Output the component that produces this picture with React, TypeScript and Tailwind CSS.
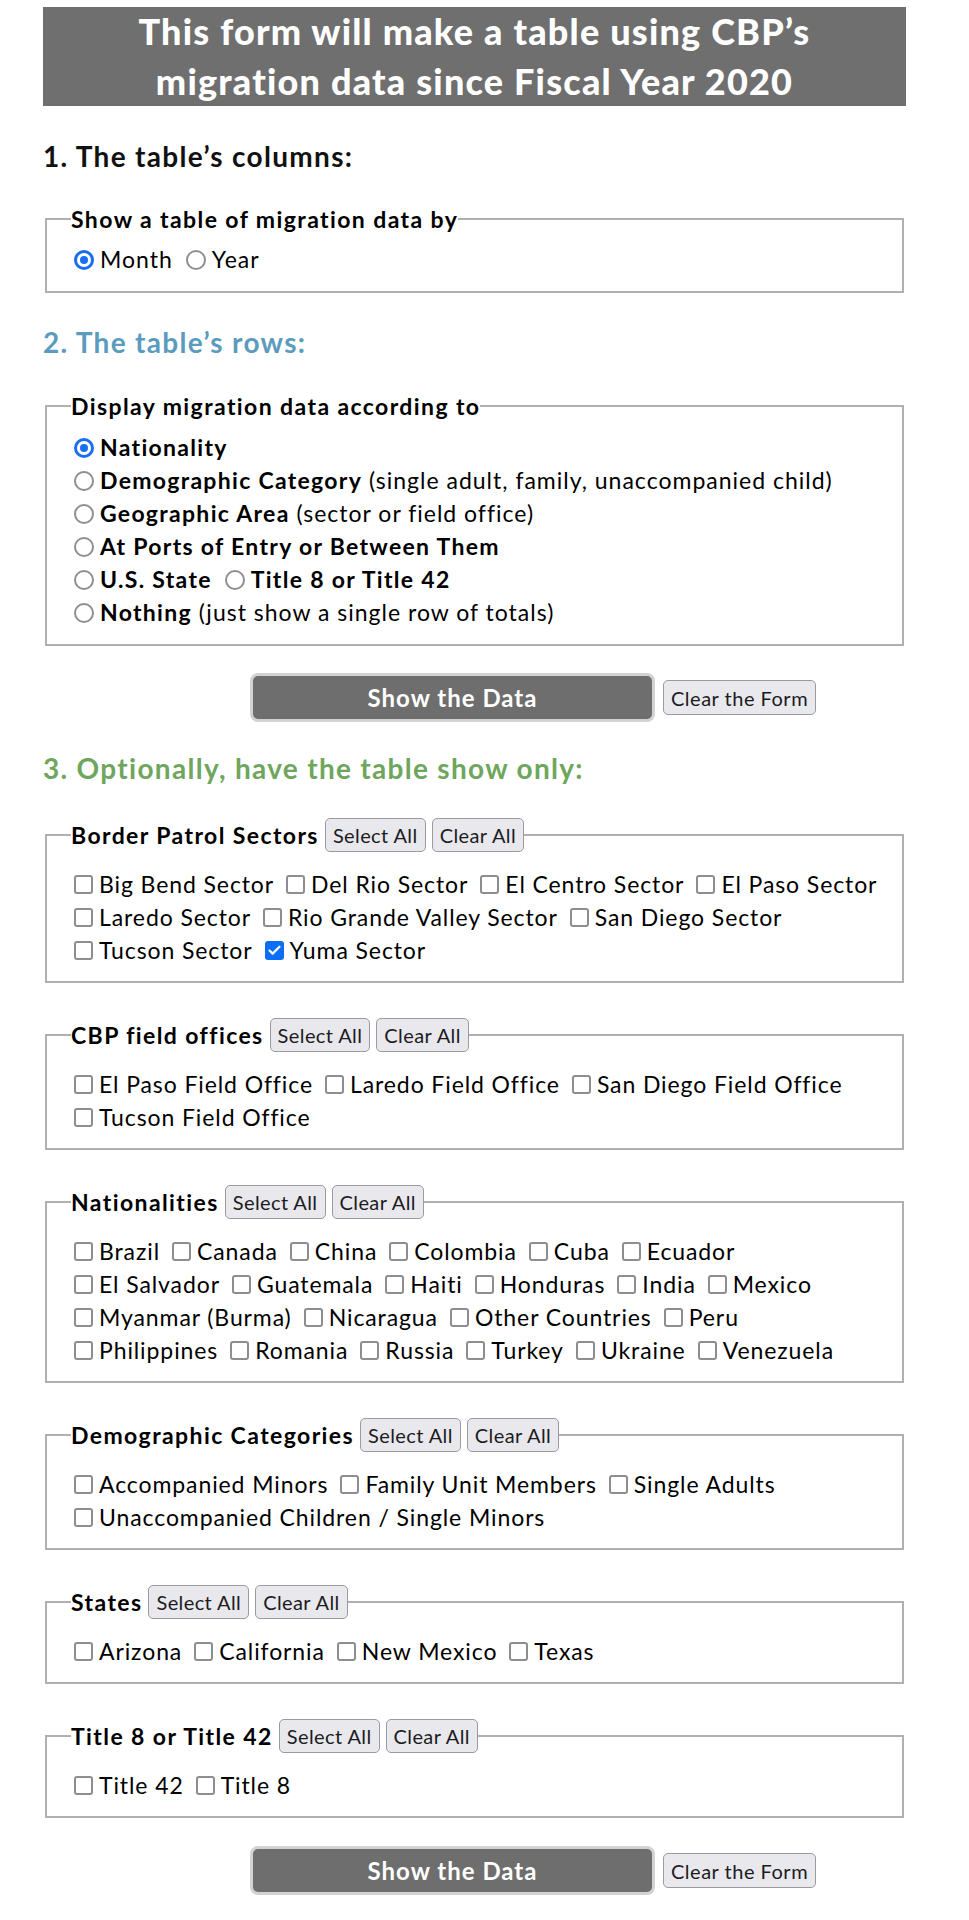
import { Check } from 'lucide-react';

type Item = { label: string; extra?: string; checked?: boolean };

const sectors: Item[][] = [
  [{ label: 'Big Bend Sector' }, { label: 'Del Rio Sector' }, { label: 'El Centro Sector' }, { label: 'El Paso Sector' }],
  [{ label: 'Laredo Sector' }, { label: 'Rio Grande Valley Sector' }, { label: 'San Diego Sector' }],
  [{ label: 'Tucson Sector' }, { label: 'Yuma Sector', checked: true }],
];

const offices: Item[][] = [
  [{ label: 'El Paso Field Office' }, { label: 'Laredo Field Office' }, { label: 'San Diego Field Office' }],
  [{ label: 'Tucson Field Office' }],
];

const nationalities: Item[][] = [
  ['Brazil', 'Canada', 'China', 'Colombia', 'Cuba', 'Ecuador'],
  ['El Salvador', 'Guatemala', 'Haiti', 'Honduras', 'India', 'Mexico'],
  ['Myanmar (Burma)', 'Nicaragua', 'Other Countries', 'Peru'],
  ['Philippines', 'Romania', 'Russia', 'Turkey', 'Ukraine', 'Venezuela'],
].map((row) => row.map((label) => ({ label })));

const demographics: Item[][] = [
  [{ label: 'Accompanied Minors' }, { label: 'Family Unit Members' }, { label: 'Single Adults' }],
  [{ label: 'Unaccompanied Children / Single Minors' }],
];

const states: Item[][] = [[{ label: 'Arizona' }, { label: 'California' }, { label: 'New Mexico' }, { label: 'Texas' }]];

const titles: Item[][] = [[{ label: 'Title 42' }, { label: 'Title 8' }]];

const rowOptions: Item[][] = [
  [{ label: 'Nationality', checked: true }],
  [{ label: 'Demographic Category', extra: '(single adult, family, unaccompanied child)' }],
  [{ label: 'Geographic Area', extra: '(sector or field office)' }],
  [{ label: 'At Ports of Entry or Between Them' }],
  [{ label: 'U.S. State' }, { label: 'Title 8 or Title 42' }],
  [{ label: 'Nothing', extra: '(just show a single row of totals)' }],
];

const Box = ({ checked = false }: { checked?: boolean }) =>
  checked ? (
    <span className="flex h-[19px] w-[19px] shrink-0 items-center justify-center rounded-[3px] bg-[#0b6ef5]">
      <Check className="h-[15px] w-[15px] text-white" strokeWidth={3.5} />
    </span>
  ) : (
    <span className="h-[19px] w-[19px] shrink-0 rounded-[3px] border-2 border-[#8d8d92] bg-white" />
  );

const Radio = ({ checked = false }: { checked?: boolean }) =>
  checked ? (
    <span className="flex h-5 w-5 shrink-0 items-center justify-center rounded-full border-[3px] border-[#1a6ff0]">
      <span className="h-[8px] w-[8px] rounded-full bg-[#1a6ff0]" />
    </span>
  ) : (
    <span className="h-5 w-5 shrink-0 rounded-full border-2 border-[#8e8e93] bg-white" />
  );

const SmallButton = ({ children }: { children: string }) => (
  <button className="h-[34px] whitespace-nowrap rounded-[5px] border border-[#9a9aa0] bg-[#e8e8ed] px-[7px] text-[20px] leading-none tracking-[0.4px] text-[#1c1c1e]">
    {children}
  </button>
);

const Group = ({ title, rows, buttons = true }: { title: string; rows: Item[][]; buttons?: boolean }) => (
  <fieldset className="mx-[2px] border-2 border-[#b0b0b0] pb-[14px] pl-[27px] pt-[16px]">
    <legend className="ml-[-3px]">
      <div className="flex items-center gap-[6px]">
        <span className="whitespace-nowrap text-[23px] font-bold leading-[22px] tracking-[1.4px] text-black">{title}</span>
        {buttons && (
          <>
            <SmallButton>Select All</SmallButton>
            <SmallButton>Clear All</SmallButton>
          </>
        )}
      </div>
    </legend>
    {rows.map((row, i) => (
      <div key={i} className="flex h-[33px] items-center gap-x-[12px]">
        {row.map((item) => (
          <label key={item.label} className="flex shrink-0 items-center gap-[6px] whitespace-nowrap text-[23px] tracking-[0.9px]">
            <Box checked={item.checked} />
            <span>{item.label}</span>
          </label>
        ))}
      </div>
    ))}
  </fieldset>
);

const SubmitRow = () => (
  <div className="ml-[207px] flex items-center gap-[8px]">
    <button className="h-[49px] w-[405px] rounded-[8px] border-[3px] border-[#d2d2d2] bg-[#6e6e6e] text-[24px] font-bold tracking-[1px] text-white">
      Show the Data
    </button>
    <button className="h-[35px] whitespace-nowrap rounded-[5px] border border-[#9a9aa0] bg-[#e8e8ed] px-[7px] text-[20px] leading-none tracking-[0.5px] text-[#1c1c1e]">
      Clear the Form
    </button>
  </div>
);

export default function App() {
  return (
    <div className="min-h-[1920px] bg-white font-[Lato,'Open_Sans',sans-serif] text-black">
      <div className="ml-[43px] w-[863px] pt-[7px]">
        <h1 className="bg-[#6f6f6f] text-center text-[36px] font-black leading-[49.5px] tracking-[1.2px] text-white">
          This form will make a table using CBP’s
          <br />
          migration data since Fiscal Year 2020
        </h1>

        <h2 className="mt-[34px] text-[28px] font-bold leading-[32px] tracking-[1.3px] text-[#111]">1. The table’s columns:</h2>
        <fieldset className="mx-[2px] mt-[36px] border-2 border-[#b0b0b0] pb-[15px] pl-[27px] pt-[13px]">
          <legend className="ml-[-3px] text-[23px] font-bold leading-[22px] tracking-[1.4px]">Show a table of migration data by</legend>
          <div className="flex h-[33px] items-center gap-x-[13px] text-[23px] tracking-[1px]">
            <label className="flex items-center gap-[6px]">
              <Radio checked />
              <span>Month</span>
            </label>
            <label className="flex items-center gap-[6px]">
              <Radio />
              <span>Year</span>
            </label>
          </div>
        </fieldset>

        <h2 className="mt-[33px] text-[28px] font-bold leading-[32px] tracking-[1.3px] text-[#5b9bbd]">2. The table’s rows:</h2>
        <fieldset className="mx-[2px] mt-[37px] border-2 border-[#b0b0b0] pb-[15px] pl-[27px] pt-[14px]">
          <legend className="ml-[-3px] text-[23px] font-bold leading-[22px] tracking-[1.4px]">Display migration data according to</legend>
          {rowOptions.map((row, i) => (
            <div key={i} className="flex h-[33px] items-center gap-x-[13px] text-[23px] tracking-[1px]">
              {row.map((item) => (
                <label key={item.label} className="flex shrink-0 items-center gap-[6px] whitespace-nowrap">
                  <Radio checked={item.checked} />
                  <span>
                    <b className="font-bold tracking-[1.3px]">{item.label}</b>
                    {item.extra && <span> {item.extra}</span>}
                  </span>
                </label>
              ))}
            </div>
          ))}
        </fieldset>

        <div className="mt-[27px]">
          <SubmitRow />
        </div>

        <h2 className="mt-[30px] text-[28px] font-bold leading-[32px] tracking-[1.3px] text-[#6ea65d]">3. Optionally, have the table show only:</h2>
        <div className="mt-[34px] flex flex-col gap-[35px]">
          <Group title="Border Patrol Sectors" rows={sectors} />
          <Group title="CBP field offices" rows={offices} />
          <Group title="Nationalities" rows={nationalities} />
          <Group title="Demographic Categories" rows={demographics} />
          <Group title="States" rows={states} />
          <Group title="Title 8 or Title 42" rows={titles} />
        </div>

        <div className="mt-[28px]">
          <SubmitRow />
        </div>
      </div>
    </div>
  );
}
